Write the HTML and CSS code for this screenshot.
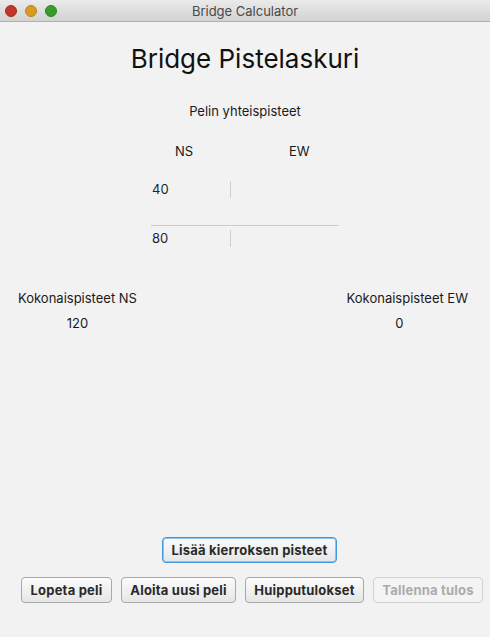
FILE: index.html
```html
<!DOCTYPE html>
<html lang="fi">
<head>
<meta charset="utf-8">
<title>Bridge Calculator</title>
<link rel="stylesheet" href="styles.css">
</head>
<body>
<div class="window">
  <div class="titlebar">
    <div class="lights">
      <span class="light red"></span>
      <span class="light yellow"></span>
      <span class="light green"></span>
    </div>
    <div class="wintitle">Bridge Calculator</div>
  </div>
  <div class="content">
    <h1 class="title">Bridge Pistelaskuri</h1>
    <div class="subtitle">Pelin yhteispisteet</div>
    <div class="scoretable">
      <div class="head ns">NS</div>
      <div class="head ew">EW</div>
      <div class="cell num r1">40</div>
      <div class="cell sep r1"></div>
      <div class="hline"></div>
      <div class="cell num r2">80</div>
      <div class="cell sep r2"></div>
    </div>
    <div class="totals">
      <div class="total left">
        <div class="tlabel">Kokonaispisteet NS</div>
        <div class="tvalue">120</div>
      </div>
      <div class="total right">
        <div class="tlabel">Kokonaispisteet EW</div>
        <div class="tvalue">0</div>
      </div>
    </div>
    <div class="spacer"></div>
    <div class="addrow">
      <button class="btn focus">Lisää kierroksen pisteet</button>
    </div>
    <div class="btnrow">
      <button class="btn w1">Lopeta peli</button>
      <button class="btn w2">Aloita uusi peli</button>
      <button class="btn w3">Huipputulokset</button>
      <button class="btn w4" disabled>Tallenna tulos</button>
    </div>
  </div>
</div>
</body>
</html>
```
FILE: styles.css
```css
* { box-sizing: border-box; }
html, body { margin: 0; padding: 0; }
body {
  width: 490px;
  height: 637px;
  overflow: hidden;
  background: #f2f2f2;
  font-family: Inter, "Liberation Sans", Arial, sans-serif;
  font-size: 13px;
  color: #1a1a1a;
}
.window {
  width: 490px;
  height: 637px;
  display: flex;
  flex-direction: column;
}
.titlebar {
  height: 22px;
  flex: none;
  position: relative;
  background: linear-gradient(#ebebeb, #d2d2d2);
  border-bottom: 1px solid #b0b0b0;
  display: flex;
  align-items: center;
  justify-content: center;
}
.lights {
  position: absolute;
  left: 5px;
  top: 5px;
  display: flex;
  gap: 8px;
}
.light {
  width: 12px;
  height: 12px;
  border-radius: 50%;
  display: block;
}
.red { background: #c4342b; border: 1px solid #a8291f; }
.yellow { background: #d99a22; border: 1px solid #bb8419; }
.green { background: #3a9b2a; border: 1px solid #2f8121; }
.wintitle {
  font-size: 13px;
  color: #4a4a4a;
  line-height: 22px;
}
.content {
  flex: 1;
  display: flex;
  flex-direction: column;
  background: #f2f2f2;
}
.title {
  margin: 22px 0 0 0;
  font-weight: normal;
  font-size: 26px;
  line-height: 30px;
  text-align: center;
  color: #111;
}
.subtitle {
  margin-top: 29px;
  line-height: 16px;
  text-align: center;
}
.scoretable {
  width: 188px;
  margin: 24px auto 0;
  display: grid;
  grid-template-columns: 79px 1px 108px;
  grid-template-rows: 16px 22px 17px 27px 1px 4px 17px;
}
.head { line-height: 16px; grid-row: 1; }
.ns { grid-column: 1; padding-left: 24px; }
.ew { grid-column: 3; padding-left: 58px; }
.num { grid-column: 1; padding-left: 1px; line-height: 17px; color: #1d2530; }
.sep { grid-column: 2; background: #cfcfcf; }
.r1 { grid-row: 3; }
.r2 { grid-row: 7; }
.hline { grid-column: 1 / 4; grid-row: 5; background: #cccccc; }
.totals {
  margin-top: 43px;
  display: flex;
  justify-content: space-between;
  padding: 0 22px 0 18px;
}
.total { display: flex; flex-direction: column; align-items: center; }
.tlabel { line-height: 16px; }
.tvalue { margin-top: 9px; line-height: 16px; }
.right .tvalue { margin-right: 16px; }
.spacer { flex: 1; }
.addrow {
  display: flex;
  justify-content: center;
  padding-left: 9px;
}
.btn {
  height: 26px;
  font-family: Inter, "Liberation Sans", Arial, sans-serif;
  font-size: 13px;
  font-weight: 700;
  letter-spacing: 0.2px;
  color: #2a2a2a;
  background: linear-gradient(#fbfbfb, #e6e6e6);
  border: 1px solid #a9a9a9;
  border-radius: 4px;
  padding: 0;
}
.focus {
  width: 175px;
  border: 1px solid #3d9bdc;
  box-shadow: inset 0 0 0 1px #8cc4ec;
}
.btnrow {
  display: flex;
  gap: 9px;
  padding: 0 0 0 21px;
  margin: 14px 0 34px;
}
.w1 { width: 91px; }
.w2 { width: 115px; }
.w3 { width: 119px; }
.w4 { width: 110px; }
.btn:disabled {
  color: #ababab;
  background: #f4f4f4;
  border-color: #d2d2d2;
}
```
